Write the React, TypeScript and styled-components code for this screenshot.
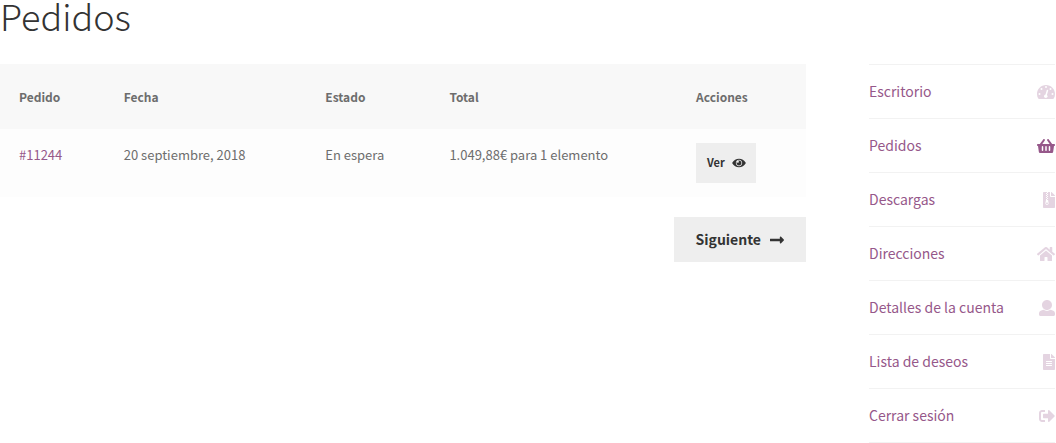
import React from "react";
import styled, { createGlobalStyle } from "styled-components";
import {
  FaShoppingBasket,
  FaFileArchive,
  FaHome,
  FaFileAlt,
  FaSignOutAlt,
  FaLongArrowAltRight,
} from "react-icons/fa";

const GlobalStyle = createGlobalStyle`
  *, *::before, *::after { box-sizing: border-box; }
  body {
    margin: 0;
    background: #fff;
    color: #6d6d6d;
    font-family: "Source Sans Pro", "Noto Sans CJK SC", "Open Sans", sans-serif;
    font-size: 14px;
    line-height: 24px;
  }
`;

const Page = styled.div`
  display: grid;
  grid-template-columns: minmax(0, 13fr) minmax(0, 3fr);
  column-gap: 63px;
  padding-right: 1px;
`;

const Title = styled.h1`
  grid-column: 1 / -1;
  margin: 0;
  padding-bottom: 34px;
  color: #333;
  font-size: 36px;
  font-weight: 300;
  line-height: 30px;
`;

const Orders = styled.table`
  width: 100%;
  border-collapse: collapse;
  table-layout: fixed;
`;

const HeadCell = styled.th<{ $width: string }>`
  width: ${(p) => p.$width};
  height: 65px;
  padding: 0 0 0 19px;
  background: #f8f8f8;
  font-size: 12px;
  font-weight: 600;
  text-align: left;
`;

const Cell = styled.td`
  height: 68px;
  padding: 14px 0 14px 19px;
  background: #fdfdfd;
  font-size: 13px;
  text-align: left;
  vertical-align: top;
`;

const OrderLink = styled.a`
  color: #96588a;
  text-decoration: none;
`;

const Label = styled.span`
  padding-bottom: 2px;
`;

const ButtonLink = styled.a<{ $small?: boolean }>`
  display: inline-flex;
  align-items: center;
  gap: ${(p) => (p.$small ? 7 : 9)}px;
  height: ${(p) => (p.$small ? 40 : 45)}px;
  padding: 0 ${(p) => (p.$small ? 10 : 22)}px;
  padding-left: ${(p) => (p.$small ? 11 : 22)}px;
  background: #eee;
  color: #333;
  font-size: ${(p) => (p.$small ? 11 : 14)}px;
  font-weight: 600;
  text-decoration: none;
  vertical-align: top;
`;

const ArrowIcon = styled(FaLongArrowAltRight)`
  width: 14px;
  height: 16px;
`;

const Pagination = styled.div`
  display: flex;
  justify-content: flex-end;
  margin-top: 20px;
`;

const Menu = styled.ul`
  margin: 0;
  padding: 0;
  border-top: 1px solid #f2f2f2;
  list-style: none;
`;

const MenuItem = styled.li`
  border-bottom: 1px solid #f2f2f2;
`;

const MenuLink = styled.a<{ $active?: boolean; $iconWidth: number }>`
  display: flex;
  align-items: center;
  justify-content: space-between;
  height: 53px;
  color: #96588a;
  text-decoration: none;
  white-space: nowrap;

  svg {
    flex: none;
    width: ${(p) => p.$iconWidth}px;
    height: 16px;
    opacity: ${(p) => (p.$active ? 1 : 0.25)};
  }
`;

const GaugeIcon = () => (
  <svg viewBox="0 0 576 512" fill="currentColor" aria-hidden="true">
    <path d="M288 32C128.94 32 0 160.94 0 320c0 52.8 14.25 102.26 39.06 144.8 5.61 9.62 16.3 15.2 27.44 15.2h443c11.14 0 21.83-5.58 27.44-15.2C561.75 422.26 576 372.8 576 320c0-159.06-128.94-288-288-288z" />
    <g fill="#fff">
      <circle cx="288" cy="96" r="32" />
      <circle cx="144" cy="160" r="32" />
      <circle cx="432" cy="160" r="32" />
      <circle cx="80" cy="320" r="32" />
      <circle cx="496" cy="320" r="32" />
      <circle cx="280" cy="390" r="56" />
    </g>
    <path d="M284 380L334 208" stroke="#fff" strokeWidth="48" strokeLinecap="round" />
  </svg>
);

const UserIcon = () => (
  <svg viewBox="0 0 512 512" fill="currentColor" aria-hidden="true">
    <path d="M256 0c88.366 0 160 71.634 160 160s-71.634 160-160 160S96 248.366 96 160 167.634 0 256 0zm183.283 333.821l-71.313-17.828c-74.923 53.89-165.738 41.864-223.94 0l-71.313 17.828C29.981 344.505 0 382.903 0 426.955V464c0 26.51 21.49 48 48 48h416c26.51 0 48-21.49 48-48v-37.045c0-44.052-29.981-82.45-72.717-93.134z" />
  </svg>
);

const EyeIcon = () => (
  <svg width="14" height="12" viewBox="0 0 576 512" fill="currentColor" aria-hidden="true">
    <path d="M569.354 231.631C512.97 135.949 407.81 72 288 72 168.14 72 63.004 135.994 6.646 231.631a47.999 47.999 0 0 0 0 48.739C63.031 376.051 168.19 440 288 440c119.86 0 224.996-63.994 281.354-159.631a47.997 47.997 0 0 0 0-48.738zM288 392c-75.162 0-136-60.827-136-136 0-75.162 60.826-136 136-136 75.162 0 136 60.826 136 136 0 75.162-60.826 136-136 136zm104-136c0 57.438-46.562 104-104 104s-104-46.562-104-104c0-17.708 4.431-34.379 12.236-48.973l-.001.032c0 23.651 19.173 42.823 42.824 42.823s42.824-19.173 42.824-42.823c0-23.651-19.173-42.824-42.824-42.824l-.032.001C253.621 156.431 270.292 152 288 152c57.438 0 104 46.562 104 104z" />
  </svg>
);

const columns = [
  { label: "Pedido", width: "13%" },
  { label: "Fecha", width: "25%" },
  { label: "Estado", width: "15.4%" },
  { label: "Total", width: "30.6%" },
  { label: "Acciones", width: "16%" },
];

const menu = [
  { label: "Escritorio", icon: <GaugeIcon />, iconWidth: 18 },
  { label: "Pedidos", icon: <FaShoppingBasket />, iconWidth: 18, active: true },
  { label: "Descargas", icon: <FaFileArchive />, iconWidth: 12 },
  { label: "Direcciones", icon: <FaHome />, iconWidth: 18 },
  { label: "Detalles de la cuenta", icon: <UserIcon />, iconWidth: 16 },
  { label: "Lista de deseos", icon: <FaFileAlt />, iconWidth: 12 },
  { label: "Cerrar sesión", icon: <FaSignOutAlt />, iconWidth: 16 },
];

export default function App() {
  return (
    <>
      <GlobalStyle />
      <Page>
        <Title>Pedidos</Title>
        <main>
          <Orders>
            <thead>
              <tr>
                {columns.map((c) => (
                  <HeadCell key={c.label} scope="col" $width={c.width}>
                    {c.label}
                  </HeadCell>
                ))}
              </tr>
            </thead>
            <tbody>
              <tr>
                <Cell>
                  <OrderLink href="#11244">#11244</OrderLink>
                </Cell>
                <Cell>
                  <time dateTime="2018-09-20">20 septiembre, 2018</time>
                </Cell>
                <Cell>En espera</Cell>
                <Cell>1.049,88€ para 1 elemento</Cell>
                <Cell>
                  <ButtonLink href="#ver" $small>
                    <Label>Ver</Label>
                    <EyeIcon />
                  </ButtonLink>
                </Cell>
              </tr>
            </tbody>
          </Orders>
          <Pagination>
            <ButtonLink href="#siguiente">
              <Label>Siguiente</Label>
              <ArrowIcon />
            </ButtonLink>
          </Pagination>
        </main>
        <nav aria-label="Mi cuenta">
          <Menu>
            {menu.map((m) => (
              <MenuItem key={m.label}>
                <MenuLink
                  href="#"
                  $active={m.active}
                  $iconWidth={m.iconWidth}
                  aria-current={m.active ? "page" : undefined}
                >
                  <Label>{m.label}</Label>
                  {m.icon}
                </MenuLink>
              </MenuItem>
            ))}
          </Menu>
        </nav>
      </Page>
    </>
  );
}
